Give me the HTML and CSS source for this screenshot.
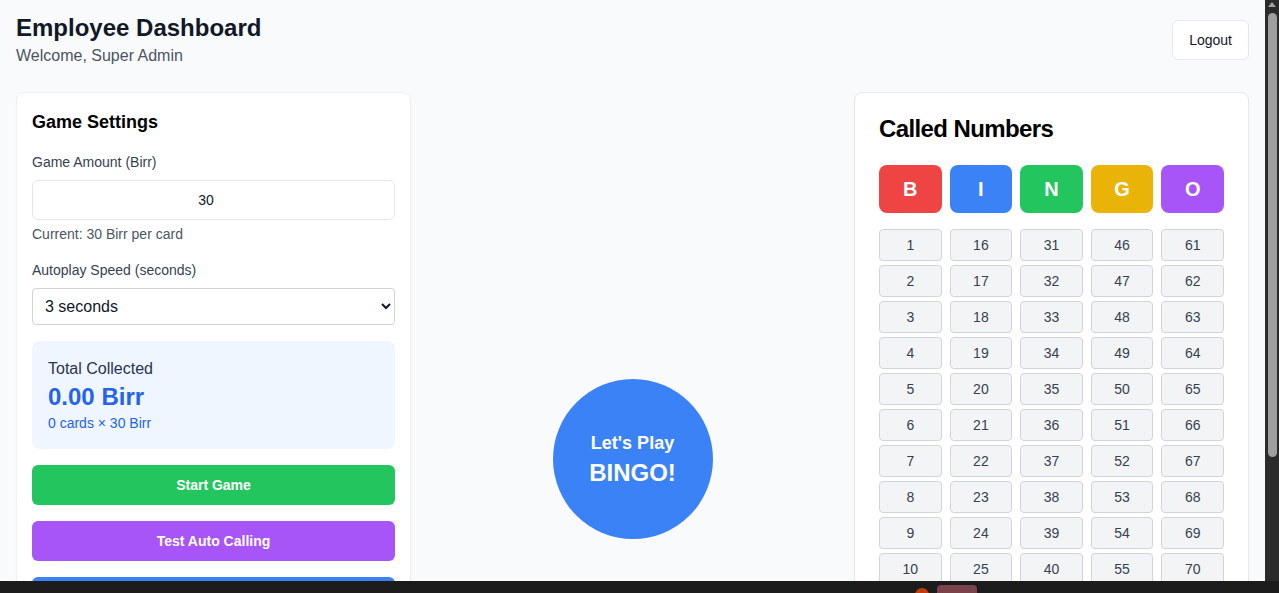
FILE: index.html
```html
<!DOCTYPE html>
<html lang="en">
<head>
<meta charset="utf-8">
<title>Employee Dashboard</title>
<link rel="stylesheet" href="styles.css">
</head>
<body>
<div class="page">
  <header class="header">
    <div class="header-text">
      <h1 class="title">Employee Dashboard</h1>
      <p class="welcome">Welcome, Super Admin</p>
    </div>
    <button class="logout">Logout</button>
  </header>

  <main class="grid">
    <section class="card settings">
      <h2 class="card-title">Game Settings</h2>
      <label class="label">Game Amount (Birr)</label>
      <input class="amount" type="number" value="30">
      <p class="hint">Current: 30 Birr per card</p>
      <label class="label label-gap">Autoplay Speed (seconds)</label>
      <select class="speed">
        <option>3 seconds</option>
      </select>
      <div class="total">
        <p class="total-label">Total Collected</p>
        <p class="total-value">0.00 Birr</p>
        <p class="total-sub">0 cards × 30 Birr</p>
      </div>
      <button class="btn btn-green">Start Game</button>
      <button class="btn btn-purple">Test Auto Calling</button>
      <button class="btn btn-blue">View Cards</button>
    </section>

    <section class="center">
      <div class="ball">
        <span class="ball-top">Let's Play</span>
        <span class="ball-main">BINGO!</span>
      </div>
    </section>

    <section class="card called">
      <h2 class="called-title">Called Numbers</h2>
      <div class="letters">
        <div class="letter l-b">B</div>
        <div class="letter l-i">I</div>
        <div class="letter l-n">N</div>
        <div class="letter l-g">G</div>
        <div class="letter l-o">O</div>
      </div>
      <div class="numbers">
        <div class="num">1</div><div class="num">16</div><div class="num">31</div><div class="num">46</div><div class="num">61</div>
        <div class="num">2</div><div class="num">17</div><div class="num">32</div><div class="num">47</div><div class="num">62</div>
        <div class="num">3</div><div class="num">18</div><div class="num">33</div><div class="num">48</div><div class="num">63</div>
        <div class="num">4</div><div class="num">19</div><div class="num">34</div><div class="num">49</div><div class="num">64</div>
        <div class="num">5</div><div class="num">20</div><div class="num">35</div><div class="num">50</div><div class="num">65</div>
        <div class="num">6</div><div class="num">21</div><div class="num">36</div><div class="num">51</div><div class="num">66</div>
        <div class="num">7</div><div class="num">22</div><div class="num">37</div><div class="num">52</div><div class="num">67</div>
        <div class="num">8</div><div class="num">23</div><div class="num">38</div><div class="num">53</div><div class="num">68</div>
        <div class="num">9</div><div class="num">24</div><div class="num">39</div><div class="num">54</div><div class="num">69</div>
        <div class="num">10</div><div class="num">25</div><div class="num">40</div><div class="num">55</div><div class="num">70</div>
        <div class="num">11</div><div class="num">26</div><div class="num">41</div><div class="num">56</div><div class="num">71</div>
        <div class="num">12</div><div class="num">27</div><div class="num">42</div><div class="num">57</div><div class="num">72</div>
        <div class="num">13</div><div class="num">28</div><div class="num">43</div><div class="num">58</div><div class="num">73</div>
        <div class="num">14</div><div class="num">29</div><div class="num">44</div><div class="num">59</div><div class="num">74</div>
        <div class="num">15</div><div class="num">30</div><div class="num">45</div><div class="num">60</div><div class="num">75</div>
      </div>
    </section>
  </main>
</div>

<div class="scrollbar">
  <svg class="scroll-arrow" width="14" height="10" viewBox="0 0 14 10"><polygon points="7,2 11,7 3,7" fill="#a3a3a3"/></svg>
  <div class="scroll-thumb"></div>
</div>

<div class="taskbar">
  <span class="tb-dot"></span>
  <span class="tb-app"></span>
</div>
</body>
</html>
```

FILE: styles.css
```css
* {
  box-sizing: border-box;
}

html, body {
  margin: 0;
  padding: 0;
  height: 100%;
  overflow: hidden;
}

body {
  background: #f9fafb;
  font-family: "Liberation Sans", Arial, sans-serif;
  color: #111827;
}

p, h1, h2 {
  margin: 0;
}

.page {
  margin-right: 14px;
  padding: 14px 16px 0 16px;
}

.header {
  display: flex;
  justify-content: space-between;
  align-items: flex-start;
  margin-bottom: 24px;
}

.title {
  font-size: 24px;
  line-height: 28px;
  font-weight: 700;
  color: #111827;
}

.welcome {
  margin-top: 2px;
  font-size: 16px;
  line-height: 24px;
  color: #4b5563;
}

.logout {
  margin-top: 6px;
  height: 40px;
  padding: 0 16px;
  background: #ffffff;
  border: 1px solid #e5e7eb;
  border-radius: 6px;
  font-family: inherit;
  font-size: 14px;
  color: #111827;
}

.grid {
  display: grid;
  grid-template-columns: repeat(3, 1fr);
  gap: 24px;
  align-items: start;
}

.card {
  background: #ffffff;
  border: 1px solid #eef0f2;
  border-radius: 8px;
  box-shadow: 0 1px 2px rgba(0, 0, 0, 0.03);
}

.settings {
  padding: 15px 15px 16px 15px;
  display: flex;
  flex-direction: column;
}

.card-title {
  font-size: 18px;
  line-height: 28px;
  font-weight: 700;
  color: #000000;
  margin-bottom: 16px;
}

.label {
  font-size: 14px;
  line-height: 20px;
  color: #374151;
  margin-bottom: 8px;
}

.label-gap {
  margin-top: 16px;
}

.amount {
  height: 40px;
  width: 100%;
  border: 1px solid #e5e7eb;
  border-radius: 6px;
  text-align: center;
  font-family: inherit;
  font-size: 14px;
  color: #111827;
  background: #ffffff;
}

.hint {
  margin-top: 4px;
  font-size: 14px;
  line-height: 20px;
  color: #4b5563;
}

.speed {
  height: 37px;
  width: 100%;
  border: 1px solid #cfd3da;
  border-radius: 4px;
  padding: 0 8px;
  font-family: inherit;
  font-size: 16px;
  color: #111827;
  background: #ffffff;
}

.total {
  margin-top: 16px;
  background: #eff6ff;
  border-radius: 8px;
  padding: 16px;
}

.total-label {
  font-size: 16px;
  line-height: 24px;
  color: #273453;
}

.total-value {
  font-size: 24px;
  line-height: 32px;
  font-weight: 700;
  color: #2563eb;
}

.total-sub {
  font-size: 14px;
  line-height: 20px;
  color: #2563eb;
}

.btn {
  margin-top: 16px;
  height: 40px;
  width: 100%;
  border: none;
  border-radius: 6px;
  color: #ffffff;
  font-family: inherit;
  font-size: 14px;
  font-weight: 700;
}

.btn-green {
  background: #22c55e;
}

.btn-purple {
  background: #a855f7;
}

.btn-blue {
  background: #3b82f6;
}

.center {
  display: flex;
  justify-content: center;
  align-self: stretch;
  padding-top: 287px;
}

.ball {
  width: 160px;
  height: 160px;
  border-radius: 50%;
  background: #3b82f6;
  color: #ffffff;
  display: flex;
  flex-direction: column;
  align-items: center;
  justify-content: center;
  font-weight: 700;
}

.ball-top {
  font-size: 18px;
  line-height: 28px;
}

.ball-main {
  font-size: 24px;
  line-height: 32px;
}

.called {
  padding: 20px 24px 24px 24px;
  border-color: #e5e7eb;
}

.called-title {
  font-size: 24px;
  line-height: 32px;
  font-weight: 700;
  letter-spacing: -0.025em;
  color: #000000;
  margin-bottom: 20px;
}

.letters {
  display: grid;
  grid-template-columns: repeat(5, 1fr);
  gap: 8px;
  margin-bottom: 16px;
}

.letter {
  height: 48px;
  border-radius: 8px;
  display: flex;
  align-items: center;
  justify-content: center;
  color: #ffffff;
  font-size: 20px;
  font-weight: 700;
}

.l-b { background: #ef4444; }
.l-i { background: #3b82f6; }
.l-n { background: #22c55e; }
.l-g { background: #eab308; }
.l-o { background: #a855f7; }

.numbers {
  display: grid;
  grid-template-columns: repeat(5, 1fr);
  column-gap: 8px;
  row-gap: 4px;
}

.num {
  height: 32px;
  background: #f3f4f6;
  border: 1px solid #d1d5db;
  border-radius: 4px;
  display: flex;
  align-items: center;
  justify-content: center;
  font-size: 14px;
  color: #374151;
}

.scrollbar {
  position: fixed;
  top: 0;
  right: 0;
  width: 14px;
  height: 100%;
  background: #2b2b2b;
}

.scroll-arrow {
  display: block;
}

.scroll-thumb {
  margin: 3px 2px 0 3px;
  height: 444px;
  border-radius: 5px;
  background: #9f9f9f;
}

.taskbar {
  position: fixed;
  left: 0;
  bottom: 0;
  width: 100%;
  height: 12px;
  background: #1c1c1c;
  display: flex;
  align-items: flex-start;
  padding-left: 915px;
  gap: 8px;
  overflow: hidden;
}

.tb-dot {
  margin-top: 7px;
  width: 14px;
  height: 14px;
  border-radius: 50%;
  background: #c43d0e;
  flex: none;
}

.tb-app {
  margin-top: 4px;
  width: 40px;
  height: 14px;
  border-radius: 4px;
  background: #7a4349;
  flex: none;
}
```
